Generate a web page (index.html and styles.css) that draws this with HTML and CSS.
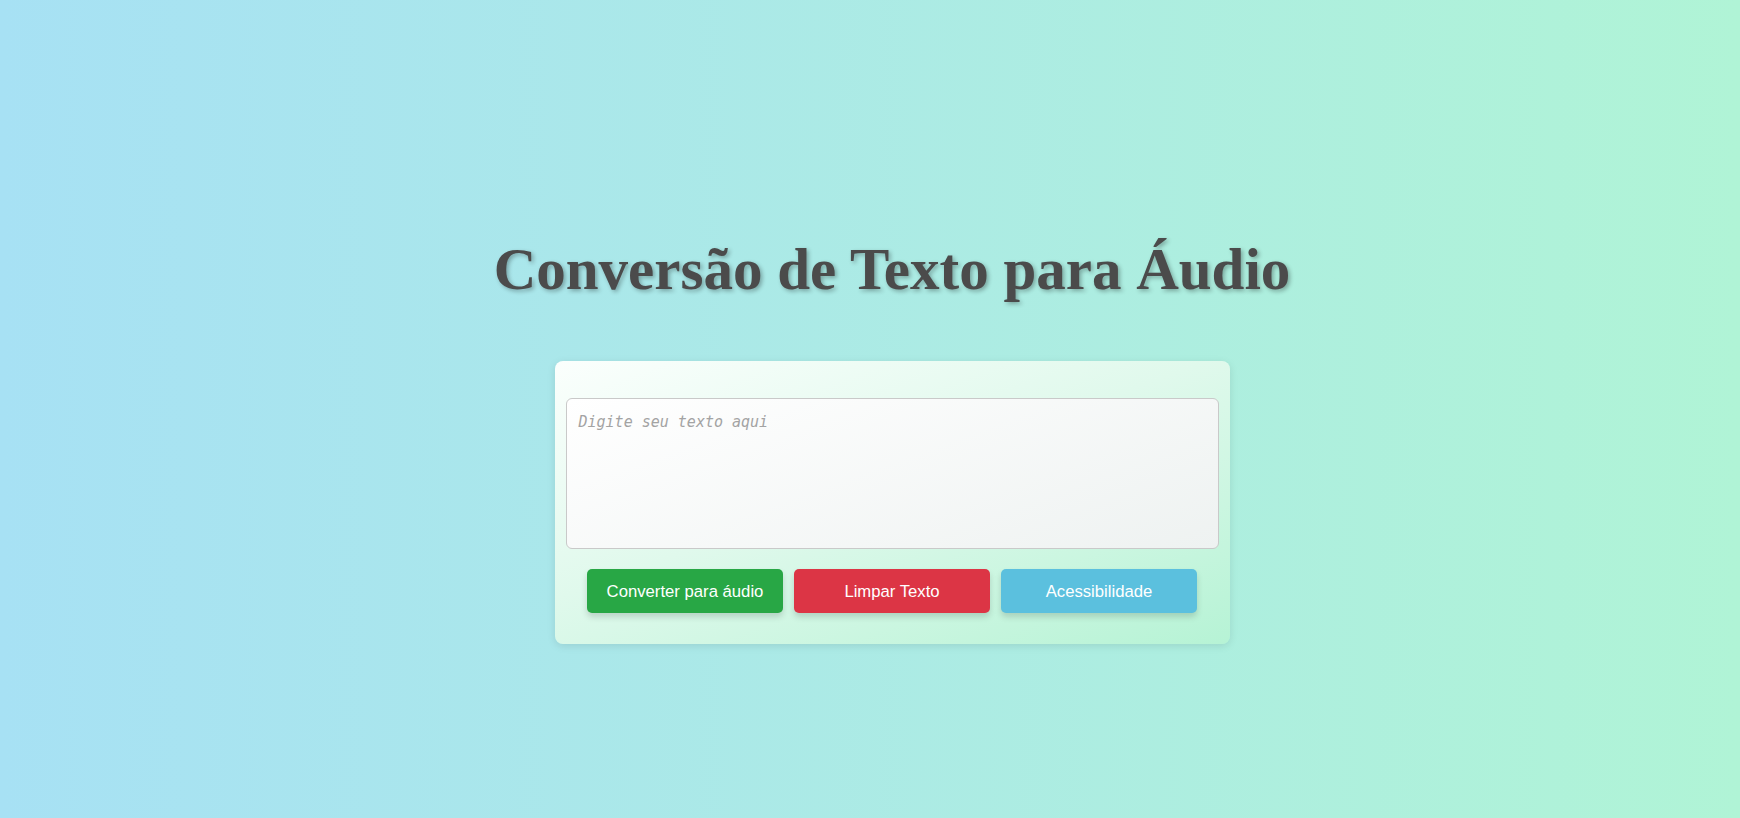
FILE: index.html
```html
<!DOCTYPE html>
<html lang="pt-BR">
<head>
<meta charset="utf-8">
<title>Conversão de Texto para Áudio</title>
<link rel="stylesheet" href="styles.css">
</head>
<body>
<main class="page">
  <h1 class="title">Conversão de Texto para Áudio</h1>
  <section class="card">
    <textarea class="text-input" placeholder="Digite seu texto aqui"></textarea>
    <div class="actions">
      <button class="btn btn-convert">Converter para áudio</button>
      <button class="btn btn-clear">Limpar Texto</button>
      <button class="btn btn-access">Acessibilidade</button>
    </div>
  </section>
</main>
</body>
</html>
```

FILE: styles.css
```css
html, body {
  margin: 0;
  height: 100%;
}
body {
  background: linear-gradient(to right, #a7e1f4, #b0f4d6);
  font-family: "Liberation Sans", Arial, sans-serif;
}
.page {
  display: flex;
  flex-direction: column;
  align-items: center;
  padding-top: 238px;
  padding-left: 44px;
}
.title {
  margin: 0;
  font-family: "Liberation Serif", Georgia, serif;
  font-weight: bold;
  font-size: 59px;
  line-height: 62px;
  color: #4b4b4b;
  text-shadow: 2px 2px 4px rgba(0, 0, 0, 0.3);
}
.card {
  margin-top: 61px;
  width: 675px;
  box-sizing: border-box;
  padding: 37px 11px 31px;
  border-radius: 8px;
  background: linear-gradient(160deg, #fbfffd 0%, #e0f9ec 45%, #b6f3d5 100%);
  box-shadow: 0 2px 8px rgba(0, 0, 0, 0.1);
  display: flex;
  flex-direction: column;
  align-items: center;
}
.text-input {
  display: block;
  width: 100%;
  height: 151px;
  box-sizing: border-box;
  padding: 14px 12px 12px;
  border: 1px solid #c9c9c9;
  border-radius: 6px;
  background: linear-gradient(160deg, #ffffff, #eef2f1);
  font-family: "DejaVu Sans Mono", monospace;
  font-size: 15px;
  resize: none;
  outline: none;
}
.text-input::placeholder {
  color: #a3a3a3;
  font-style: italic;
}
.actions {
  margin-top: 20px;
  display: flex;
  gap: 11px;
}
.btn {
  width: 196px;
  height: 44px;
  padding: 2px 0 0;
  border: none;
  border-radius: 5px;
  color: #fff;
  font-family: "Liberation Sans", Arial, sans-serif;
  font-size: 16.7px;
  box-shadow: 0 4px 6px rgba(0, 0, 0, 0.15);
  cursor: pointer;
}
.btn-convert { background: #28a745; }
.btn-clear { background: #dc3545; }
.btn-access { background: #5bc0de; }
```
